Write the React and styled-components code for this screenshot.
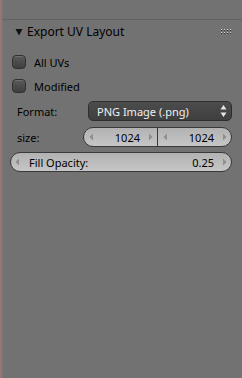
import React from "react";
import styled, { createGlobalStyle } from "styled-components";

const Global = createGlobalStyle`
  html, body { margin: 0; padding: 0; background: #727272; }
  body { font-family: "Noto Sans", "Open Sans", "DejaVu Sans", sans-serif; font-size: 11px; }
`;

const Screen = styled.div`
  display: flex;
  width: 242px;
  height: 378px;
  background: #727272;
  overflow: hidden;
`;

const EdgeStrip = styled.div`
  width: 2px;
  background: #9a7373;
  flex: none;
`;

const Region = styled.div`
  flex: 1;
  display: flex;
  flex-direction: column;
  padding-top: 19px;
  box-shadow: inset 1px 0 0 #767676;
`;

const Header = styled.div`
  height: 23px;
  border-top: 1px solid #626262;
  display: flex;
  align-items: center;
  padding: 0 10px 0 13px;
  color: #000;
  font-size: 12px;
  box-sizing: content-box;
`;

const HeaderTitle = styled.span`
  flex: 1;
  margin-left: 4px;
  line-height: 1;
`;

const Body = styled.div`
  display: flex;
  flex-direction: column;
  padding: 7px 10px 0 0;
`;

const CheckRow = styled.label`
  height: 24px;
  display: flex;
  align-items: center;
  gap: 8px;
  padding-left: 10px;
  color: #000;
`;

const CheckBox = styled.span`
  width: 12px;
  height: 12px;
  border: 1px solid #303030;
  border-radius: 4px;
  background: linear-gradient(#5a5a5a, #3e3e3e);
  box-shadow: inset 0 1px 0 rgba(255,255,255,0.12);
  flex: none;
`;

const FieldRow = styled.div`
  height: 26px;
  display: flex;
  align-items: center;
  padding-left: 15px;
`;

const Label = styled.span`
  width: ${(p) => p.$w}px;
  flex: none;
  color: #000;
`;

const Dropdown = styled.div`
  flex: 1;
  height: 18px;
  border: 1px solid #2e2e2e;
  border-radius: 5px;
  background: linear-gradient(#4c4c4c, #3f3f3f);
  display: flex;
  align-items: center;
  padding: 0 4px 0 8px;
  color: #f0f0f0;
`;

const DropText = styled.span`
  flex: 1;
`;

const NumPair = styled.div`
  flex: 1;
  height: 18px;
  display: flex;
  border: 1px solid #3a3a3a;
  border-radius: 10px;
  overflow: hidden;
  background: linear-gradient(#b2b2b2, #c6c6c6);
`;

const NumHalf = styled.div`
  flex: 1;
  display: flex;
  align-items: center;
  padding: 0 4px 0 5px;
  color: #000;
  & + & { border-left: 1px solid #3a3a3a; }
`;

const NumValue = styled.span`
  flex: 1;
  text-align: ${(p) => (p.$left ? "left" : "right")};
  padding: 0 ${(p) => (p.$left ? 0 : 8)}px 0 ${(p) => (p.$left ? 9 : 0)}px;
`;

const SliderRow = styled.div`
  height: 24px;
  display: flex;
  align-items: center;
  padding-left: 8px;
`;

const Slider = styled.div`
  flex: 1;
  height: 18px;
  display: flex;
  align-items: center;
  border: 1px solid #3a3a3a;
  border-radius: 10px;
  background: linear-gradient(#b2b2b2, #c6c6c6);
  padding: 0 4px 0 4px;
  color: #000;
`;

const Arrow = ({ dir }) => (
  <svg width="5" height="8" viewBox="0 0 5 8" style={{ flex: "none" }}>
    {dir === "left" ? (
      <polygon points="4,0.5 4,7.5 0.5,4" fill="#8e8e8e" />
    ) : (
      <polygon points="1,0.5 1,7.5 4.5,4" fill="#8e8e8e" />
    )}
  </svg>
);

const UpDown = () => (
  <svg width="7" height="14" viewBox="0 0 7 14" style={{ flex: "none" }}>
    <polygon points="3.5,1 6.5,5.5 0.5,5.5" fill="#e6e6e6" />
    <polygon points="3.5,13 6.5,8.5 0.5,8.5" fill="#e6e6e6" />
  </svg>
);

const Triangle = () => (
  <svg width="8" height="8" viewBox="0 0 8 8" style={{ flex: "none" }}>
    <polygon points="0.5,1 7.5,1 4,7.5" fill="#111" />
  </svg>
);

const DragDots = () => {
  const dots = [];
  for (let c = 0; c < 4; c++) {
    for (let r = 0; r < 2; r++) {
      dots.push(<rect key={`l${c}${r}`} x={c * 3} y={r * 3} width="1" height="1" fill="#d8d8d8" />);
      dots.push(<rect key={`d${c}${r}`} x={c * 3} y={r * 3 + 1} width="1" height="1" fill="#303030" />);
    }
  }
  return (
    <svg width="11" height="6" viewBox="0 0 11 6" style={{ flex: "none", marginTop: 1 }}>
      {dots}
    </svg>
  );
};

export default function App() {
  return (
    <>
      <Global />
      <Screen>
        <EdgeStrip />
        <Region>
          <Header>
            <Triangle />
            <HeaderTitle>Export UV Layout</HeaderTitle>
            <DragDots />
          </Header>
          <Body>
            <CheckRow>
              <CheckBox />
              All UVs
            </CheckRow>
            <CheckRow>
              <CheckBox />
              Modified
            </CheckRow>
            <FieldRow>
              <Label $w={71}>Format:</Label>
              <Dropdown>
                <DropText>PNG Image (.png)</DropText>
                <UpDown />
              </Dropdown>
            </FieldRow>
            <FieldRow>
              <Label $w={66}>size:</Label>
              <NumPair>
                <NumHalf>
                  <Arrow dir="left" />
                  <NumValue>1024</NumValue>
                  <Arrow dir="right" />
                </NumHalf>
                <NumHalf>
                  <Arrow dir="left" />
                  <NumValue>1024</NumValue>
                  <Arrow dir="right" />
                </NumHalf>
              </NumPair>
            </FieldRow>
            <SliderRow>
              <Slider>
                <Arrow dir="left" />
                <NumValue $left>Fill Opacity:</NumValue>
                <NumValue>0.25</NumValue>
                <Arrow dir="right" />
              </Slider>
            </SliderRow>
          </Body>
        </Region>
      </Screen>
    </>
  );
}
